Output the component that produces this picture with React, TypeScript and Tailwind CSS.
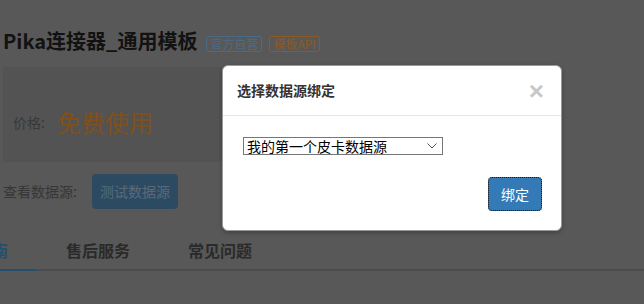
import React from 'react';

const tabs = ['使用指南', '售后服务', '常见问题'];

export default function App() {
  return (
    <div
      className="relative w-[644px] h-[304px] overflow-hidden bg-[#585858]"
      style={{ fontFamily: '"Noto Sans CJK SC", "Noto Sans", sans-serif' }}
    >
      {/* page behind the backdrop, already dimmed */}
      <div className="pl-[3px] pt-[29px]">
        <div className="flex items-center">
          <h1 className="text-[20px] leading-[24px] font-bold text-[#121212]">Pika连接器_通用模板</h1>
          <span className="ml-[9px] mt-[6px] px-[3px] h-[16px] shrink-0 border border-[#4a6b86] rounded-[2px] text-[12px] leading-[14px] text-[#4a6b86]">
            官方自营
          </span>
          <span className="ml-[7px] mt-[6px] px-[3px] h-[16px] shrink-0 border border-[#8c5a25] rounded-[2px] text-[12px] leading-[14px] text-[#8c5a25]">
            模板API
          </span>
        </div>

        <div className="mt-[14px] w-[520px] h-[95px] bg-[#535353] pl-[10px] pt-[39px] flex items-start">
          <span className="text-[14px] leading-[32px] text-[#383838]">价格:</span>
          <span className="ml-[12px] text-[24px] leading-[32px] text-[#80501c]">免费使用</span>
        </div>

        <div className="mt-[12px] flex items-center">
          <span className="text-[14px] text-[#363636]">查看数据源:</span>
          <button className="ml-[15px] h-[35px] w-[86px] rounded-[4px] bg-[#2c4b63] text-[14px] text-[#5b6a77]">
            测试数据源
          </button>
        </div>

        <div className="-ml-[88px] mt-[19px] flex items-start border-b-2 border-[#4b4b4b]">
          {tabs.map((t, i) => (
            <div
              key={t}
              className={
                i === 0
                  ? 'h-[43px] -mb-[2px] px-[29px] pt-[10px] border-b-2 border-[#23506f] text-[16px] leading-[24px] font-bold text-[#23506f]'
                  : 'h-[41px] px-[29px] pt-[10px] text-[16px] leading-[24px] font-bold text-[#2a2a2a]'
              }
            >
              {t}
            </div>
          ))}
        </div>
      </div>

      {/* modal */}
      <div className="absolute left-[222px] top-[65px] w-[340px] h-[166px] bg-white rounded-[6px] border border-[#9a9a9a] shadow-[0_2px_4px_rgba(0,0,0,0.25)] flex flex-col">
        <div className="h-[50px] border-b border-[#e5e5e5] flex items-center justify-between pl-[14px] pr-[17px]">
          <h3 className="text-[14px] font-bold text-[#333]">选择数据源绑定</h3>
          <span className="text-[26px] leading-none font-bold text-[#c8c8c8]" style={{ fontFamily: '"Liberation Sans", sans-serif' }}>
            ×
          </span>
        </div>
        <div className="pl-[20px] pt-[21px]">
          <div className="w-[200px] h-[18px] border border-[#767676] bg-white flex items-center justify-between pl-[3px] pr-[5px]">
            <span className="text-[14px] leading-[16px] text-black">我的第一个皮卡数据源</span>
            <svg width="10" height="6" viewBox="0 0 10 6" fill="none" stroke="#555" strokeWidth="1">
              <path d="M0.5 0.5 L5 5 L9.5 0.5" />
            </svg>
          </div>
        </div>
        <div className="flex justify-end pr-[19px] pt-[22px]">
          <button className="w-[54px] h-[34px] rounded-[4px] bg-[#337ab7] border border-[#2e6da4] text-[14px] text-white outline-1 outline-dotted outline-[#1a1a1a] -outline-offset-1">
            绑定
          </button>
        </div>
      </div>
    </div>
  );
}
